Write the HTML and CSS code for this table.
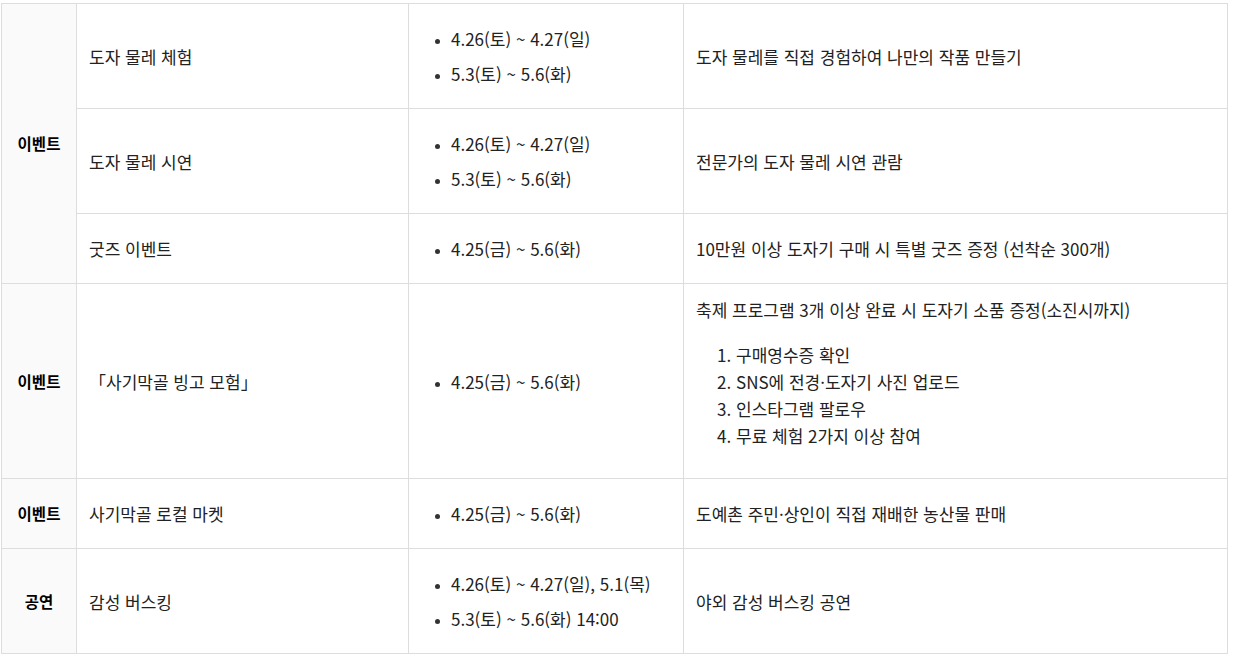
FILE: index.html
```html
<!DOCTYPE html>
<html lang="ko">
<head>
<meta charset="utf-8">
<title>프로그램</title>
<link rel="stylesheet" href="styles.css">
</head>
<body>
<div class="wrap">
<table class="program">
  <colgroup>
    <col class="c-type">
    <col class="c-name">
    <col class="c-date">
    <col class="c-desc">
  </colgroup>
  <tbody>
    <tr>
      <th rowspan="3">이벤트</th>
      <td>도자 물레 체험</td>
      <td><ul class="dates"><li>4.26(토) ~ 4.27(일)</li><li>5.3(토) ~ 5.6(화)</li></ul></td>
      <td>도자 물레를 직접 경험하여 나만의 작품 만들기</td>
    </tr>
    <tr>
      <td>도자 물레 시연</td>
      <td><ul class="dates"><li>4.26(토) ~ 4.27(일)</li><li>5.3(토) ~ 5.6(화)</li></ul></td>
      <td>전문가의 도자 물레 시연 관람</td>
    </tr>
    <tr>
      <td>굿즈 이벤트</td>
      <td><ul class="dates"><li>4.25(금) ~ 5.6(화)</li></ul></td>
      <td>10만원 이상 도자기 구매 시 특별 굿즈 증정 (선착순 300개)</td>
    </tr>
    <tr>
      <th>이벤트</th>
      <td>「사기막골 빙고 모험」</td>
      <td><ul class="dates"><li>4.25(금) ~ 5.6(화)</li></ul></td>
      <td>
        <p class="lead">축제 프로그램 3개 이상 완료 시 도자기 소품 증정(소진시까지)</p>
        <ol class="steps">
          <li>구매영수증 확인</li>
          <li>SNS에 전경·도자기 사진 업로드</li>
          <li>인스타그램 팔로우</li>
          <li>무료 체험 2가지 이상 참여</li>
        </ol>
      </td>
    </tr>
    <tr>
      <th>이벤트</th>
      <td>사기막골 로컬 마켓</td>
      <td><ul class="dates"><li>4.25(금) ~ 5.6(화)</li></ul></td>
      <td>도예촌 주민·상인이 직접 재배한 농산물 판매</td>
    </tr>
    <tr>
      <th>공연</th>
      <td>감성 버스킹</td>
      <td><ul class="dates"><li>4.26(토) ~ 4.27(일), 5.1(목)</li><li>5.3(토) ~ 5.6(화) 14:00</li></ul></td>
      <td>야외 감성 버스킹 공연</td>
    </tr>
  </tbody>
</table>
</div>
</body>
</html>
```

FILE: styles.css
```css
html, body {
  margin: 0;
  padding: 0;
  background: #fff;
}

body {
  font-family: "Noto Sans CJK KR", "Noto Sans", sans-serif;
  color: #222;
  font-size: 17px;
}

.wrap {
  padding: 3px 0 0 1px;
}

.program {
  border-collapse: collapse;
  table-layout: fixed;
  width: 1227px;
}

.c-type { width: 75px; }
.c-name { width: 332px; }
.c-date { width: 275px; }
.c-desc { width: 544px; }

.program th,
.program td {
  border: 1px solid #ddd;
  padding: 12px;
  vertical-align: middle;
  line-height: 27px;
  text-align: left;
}

.program th {
  background: #fafafa;
  color: #000;
  font-size: 15.5px;
  font-weight: 700;
  text-align: center;
  padding: 12px 4px;
}

.dates {
  margin: 5px 0;
  padding-left: 30px;
  list-style: disc;
}

.dates li {
  padding: 4px 0;
}

.dates li::marker {
  font-size: 12px;
  color: #333;
}

.lead {
  margin: 0;
}

.steps {
  margin: 18px 0 17px;
  padding-left: 40px;
}
```
